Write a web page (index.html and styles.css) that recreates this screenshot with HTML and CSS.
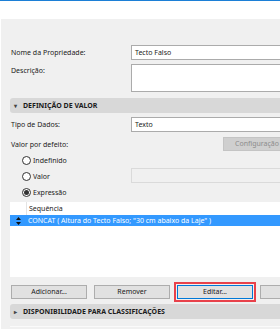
FILE: index.html
```html
<!DOCTYPE html>
<html lang="pt">
<head>
  <meta charset="UTF-8">
  <title>Definição de Propriedade</title>
  <link rel="stylesheet" href="styles.css">
</head>
<body>
  <div class="window">
    <div class="titlebar"></div>

    <div class="panel">
      <div class="form-row name-row">
        <label>Nome da Propriedade:</label>
        <div class="field">Tecto Falso</div>
      </div>

      <div class="form-row desc-row">
        <label class="top">Descrição:</label>
        <div class="field area"></div>
      </div>

      <div class="section-head"><span class="caret">&#9662;</span>DEFINIÇÃO DE VALOR</div>

      <div class="form-row type-row">
        <label>Tipo de Dados:</label>
        <div class="field">Texto</div>
      </div>

      <div class="form-row default-row">
        <label>Valor por defeito:</label>
        <div class="btn disabled config-btn">Configuração</div>
      </div>

      <div class="radio-row">
        <span class="radio"></span>Indefinido
      </div>
      <div class="radio-row">
        <span class="radio"></span>Valor
        <div class="field disabled value-field"></div>
      </div>
      <div class="radio-row">
        <span class="radio checked"></span>Expressão
      </div>

      <!-- expression list -->
      <div class="list">
        <div class="list-head">
          <span class="handle-col"></span>
          <span>Sequência</span>
        </div>
        <div class="list-item selected">
          <span class="handle-col">
            <svg width="5" height="8" viewBox="0 0 5 8">
              <path d="M2.5 0 L5 3 L0 3 Z M2.5 8 L5 5 L0 5 Z" fill="#111"/>
            </svg>
          </span>
          <span>CONCAT ( Altura do Tecto Falso; "30 cm abaixo da Laje" )</span>
        </div>
      </div>

      <div class="button-row">
        <div class="btn">Adicionar...</div>
        <div class="btn">Remover</div>
        <div class="btn default highlighted">Editar...</div>
        <div class="btn"></div>
      </div>

      <div class="section-head closed"><span class="caret">&#9656;</span>DISPONIBILIDADE PARA CLASSIFICAÇÕES</div>

      <div class="separator"></div>
    </div>
  </div>
</body>
</html>
```

FILE: styles.css
```css
body {
  margin: 0;
  width: 280px;
  height: 329px;
  overflow: hidden;
  background: #fff;
  font-family: "Noto Sans", "Open Sans", sans-serif;
  font-size: 7px;
  color: #1b1b1b;
}

.window {
  width: 282px;
  border-top: 1px solid #1c7fd6;
}

.titlebar {
  height: 18px;
  background: #fff;
}

.panel {
  background: #f0f0f0;
  margin-left: 1px;
  padding: 26px 0 5px 9px;
  overflow: hidden;
}

.form-row {
  display: grid;
  grid-template-columns: 121px 1fr;
  align-items: center;
}

.form-row label {
  padding-left: 1px;
}

.form-row label.top {
  align-self: start;
  padding-top: 2px;
}

.field {
  box-sizing: border-box;
  height: 15px;
  background: #fff;
  border: 1px solid #ababab;
  padding: 0 3px;
  line-height: 13px;
  white-space: nowrap;
}

.field.area {
  height: 28px;
}

.field.disabled {
  background: #f0f0f0;
  border-color: #dadada;
}

.desc-row {
  margin-top: 4px;
}

.section-head {
  height: 15px;
  line-height: 15px;
  background: #d8d8d8;
  border-radius: 3px 0 0 3px;
  font-weight: bold;
  margin-top: 6px;
  white-space: nowrap;
}

.section-head .caret {
  display: inline-block;
  width: 9px;
  padding-left: 4px;
  font-size: 6px;
  color: #444;
}

.type-row {
  margin-top: 4px;
}

.default-row {
  height: 14px;
  margin-top: 5px;
}

.btn.config-btn {
  width: 58px;
  margin-left: 92px;
  padding-left: 11px;
  text-align: left;
}

.radio-row {
  display: flex;
  align-items: center;
  height: 16px;
  padding-left: 12px;
  position: relative;
}

.default-row + .radio-row {
  margin-top: 1px;
}

.radio {
  box-sizing: border-box;
  width: 9px;
  height: 9px;
  border: 1px solid #333;
  border-radius: 50%;
  background: #fff;
  margin-right: 2px;
  display: flex;
  align-items: center;
  justify-content: center;
}

.radio.checked::after {
  content: "";
  width: 5px;
  height: 5px;
  border-radius: 50%;
  background: #333;
}

.value-field {
  position: absolute;
  left: 121px;
  right: 0;
  top: 0;
}

.list {
  background: #fff;
  height: 75px;
  margin-top: 2px;
}

.list-head,
.list-item {
  display: flex;
  align-items: center;
  white-space: nowrap;
}

.list-head {
  height: 13px;
}

.list-head .handle-col {
  align-self: stretch;
  border-right: 1px solid #e4e4e4;
}

.handle-col {
  width: 16px;
  margin-right: 2px;
  display: flex;
  align-items: center;
  justify-content: center;
}

.list-item {
  height: 11px;
}

.list-item.selected {
  background: #3399ff;
  color: #fff;
}

.button-row {
  display: flex;
  gap: 7px;
  margin-top: 8px;
  padding-left: 1px;
}

.btn {
  box-sizing: border-box;
  flex-shrink: 0;
  width: 76px;
  height: 14px;
  line-height: 12px;
  text-align: center;
  background: #e1e1e1;
  border: 1px solid #adadad;
  white-space: nowrap;
}

.btn.disabled {
  background: #cfcfcf;
  border-color: #c4c4c4;
  color: #8d8d8d;
}

.btn.default {
  border-color: #0078d7;
}

.btn.highlighted {
  outline: 2px solid #e8414a;
  outline-offset: 1px;
}

.section-head.closed {
  margin-top: 5px;
}

.separator {
  height: 1px;
  background: #fafafa;
  margin-top: 7px;
}
```
